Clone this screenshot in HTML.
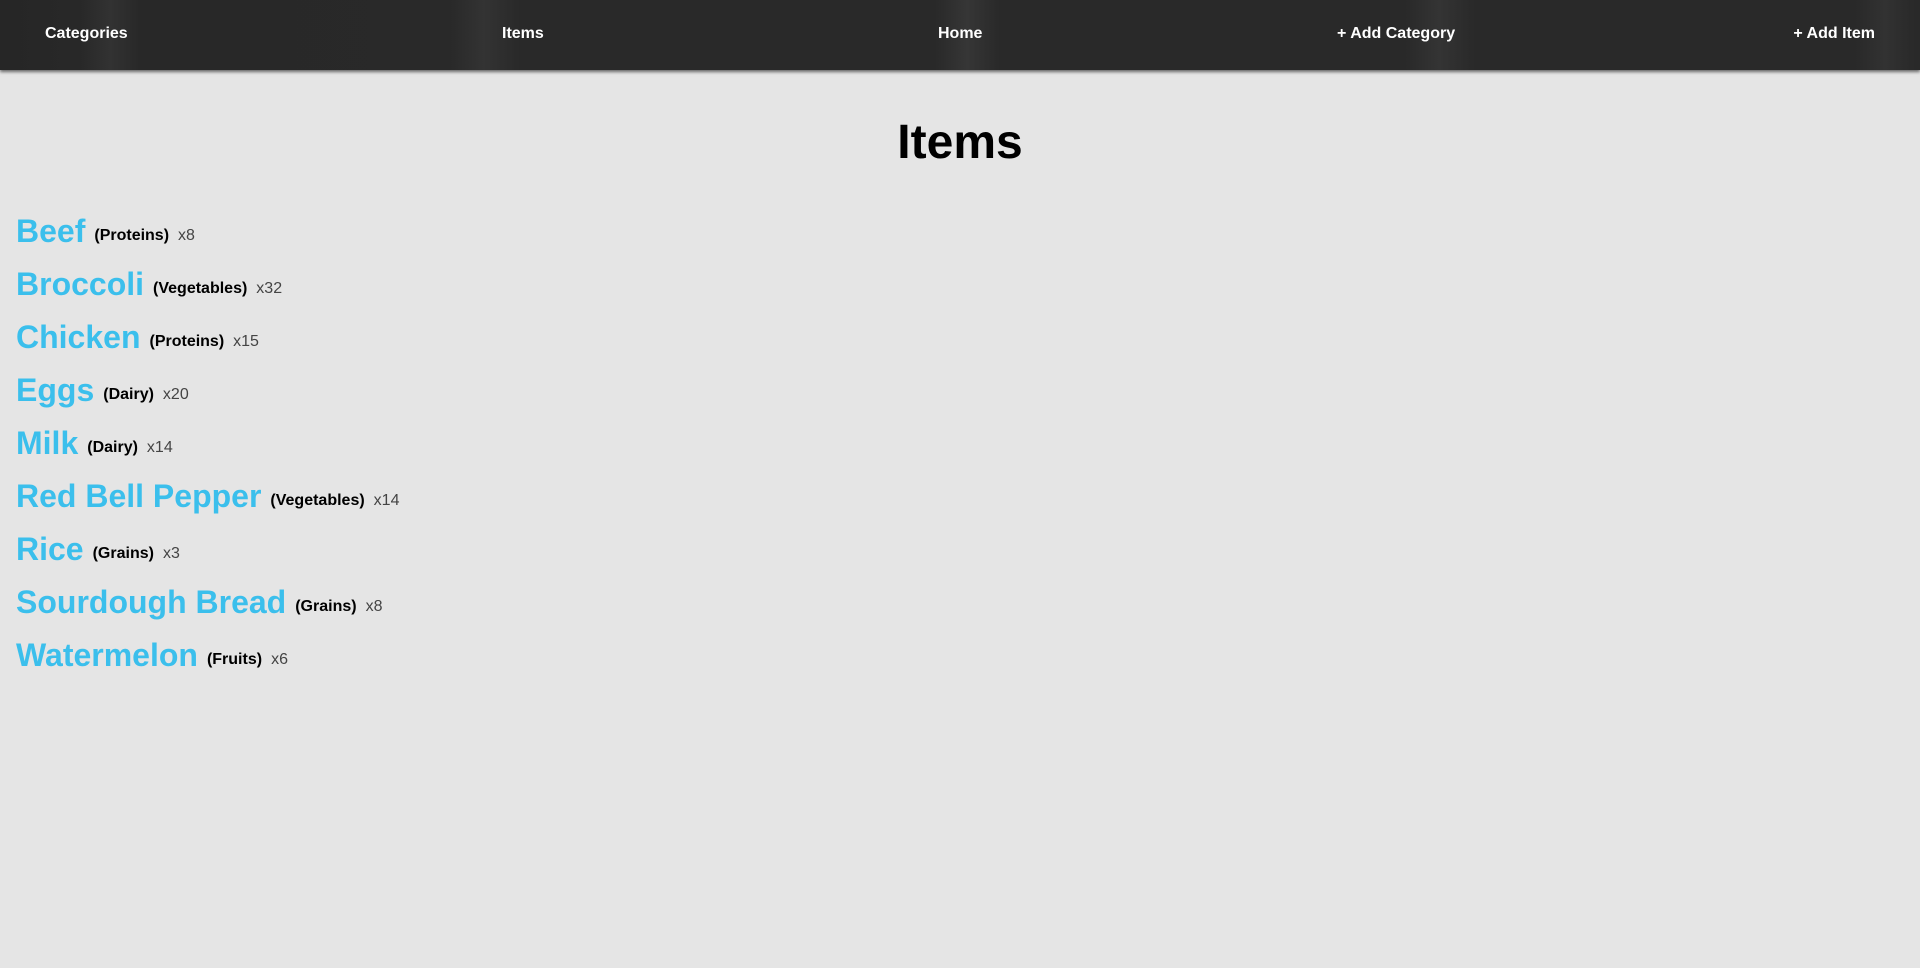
<!DOCTYPE html>
<html><head><meta charset="utf-8"><style>
html,body{margin:0;padding:0;}
body{width:1920px;height:968px;background:#e5e5e5;font-family:"Liberation Sans",Arial,sans-serif;overflow:hidden;}
nav{position:relative;height:70px;background:linear-gradient(90deg,#262626 0px,#282828 80px,#323232 110px,#282828 140px,#292929 450px,#333 484px,#292929 520px,#292929 935px,#363636 967px,#292929 1000px,#292929 1405px,#343434 1439px,#292929 1475px,#292929 1855px,#323232 1885px,#292929 1915px);box-shadow:0 2px 3px rgba(0,0,0,.55);}
nav a{position:absolute;top:25px;color:#fff;font-weight:bold;font-size:16px;text-decoration:none;}
h1{text-align:center;font-size:48px;margin:0;position:absolute;top:113px;left:0;width:1920px;line-height:60px;}
.row{position:absolute;left:16px;white-space:nowrap;}
.n{color:#3bbfec;font-weight:bold;font-size:32px;}
.c{font-weight:bold;font-size:16px;color:#000;margin-left:9px;position:relative;top:-2px;}
.q{font-size:16px;color:#444;margin-left:9px;position:relative;top:-2px;}
</style></head><body>
<nav><a style="left:45px">Categories</a><a style="left:502px">Items</a><a style="left:938px">Home</a><a style="left:1337px">+ Add Category</a><a style="right:45px">+ Add Item</a></nav>
<h1>Items</h1>
<div class="row" style="top:213px"><span class="n">Beef</span><span class="c">(Proteins)</span><span class="q">x8</span></div>
<div class="row" style="top:266px"><span class="n">Broccoli</span><span class="c">(Vegetables)</span><span class="q">x32</span></div>
<div class="row" style="top:319px"><span class="n">Chicken</span><span class="c">(Proteins)</span><span class="q">x15</span></div>
<div class="row" style="top:372px"><span class="n">Eggs</span><span class="c">(Dairy)</span><span class="q">x20</span></div>
<div class="row" style="top:425px"><span class="n">Milk</span><span class="c">(Dairy)</span><span class="q">x14</span></div>
<div class="row" style="top:478px"><span class="n">Red Bell Pepper</span><span class="c">(Vegetables)</span><span class="q">x14</span></div>
<div class="row" style="top:531px"><span class="n">Rice</span><span class="c">(Grains)</span><span class="q">x3</span></div>
<div class="row" style="top:584px"><span class="n">Sourdough Bread</span><span class="c">(Grains)</span><span class="q">x8</span></div>
<div class="row" style="top:637px"><span class="n">Watermelon</span><span class="c">(Fruits)</span><span class="q">x6</span></div>
</body></html>
